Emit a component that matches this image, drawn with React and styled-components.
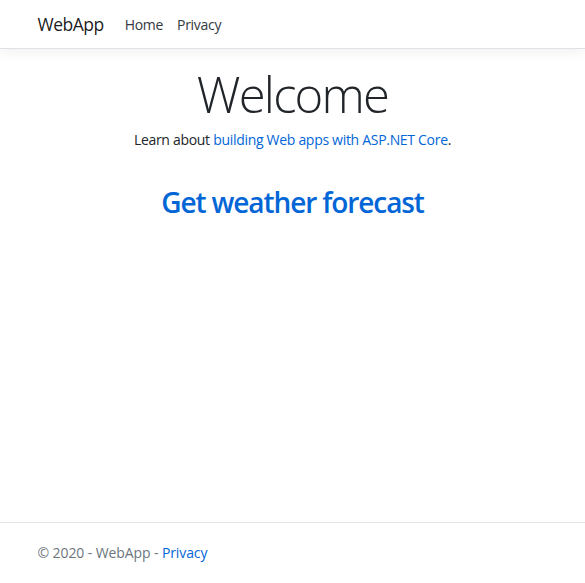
import React from "react";
import styled, { createGlobalStyle } from "styled-components";

const GlobalStyle = createGlobalStyle`
  html { font-size: 14px; }
  body {
    margin: 0;
    font-family: "Open Sans", "Liberation Sans", sans-serif;
    color: #212529;
    background: #fff;
    line-height: 1.5;
  }
  * { box-sizing: border-box; }
  a { color: #0366d6; text-decoration: none; }
`;

const Page = styled.div`
  min-height: 100vh;
  display: flex;
  flex-direction: column;
`;

const Container = styled.div`
  width: 100%;
  max-width: 540px;
  margin: 0 auto;
  padding: 0 15px;
`;

const Navbar = styled.header`
  background: #fff;
  border-bottom: 1px solid #dee2e6;
  box-shadow: 0 0.25rem 0.75rem rgba(0, 0, 0, 0.05);
  padding: 8.5px 16px 7.5px;
  margin-bottom: 14px;
`;

const NavInner = styled(Container)`
  display: flex;
  align-items: center;
  height: 32px;
`;

const Brand = styled.a`
  color: rgba(0, 0, 0, 0.9);
  font-size: 17.5px;
  letter-spacing: -0.5px;
  margin-right: 14px;
`;

const NavLink = styled.a`
  color: #343a40;
  font-size: 14px;
  letter-spacing: -0.3px;
  padding: 0 7px;
`;

const Main = styled.main`
  flex: 1;
  text-align: center;
`;

const Title = styled.h1`
  font-size: 49px;
  font-weight: 300;
  letter-spacing: -1.8px;
  line-height: 1.2;
  margin: 0 0 5px;
  padding-top: 2px;
`;

const Lead = styled.p`
  font-size: 14px;
  letter-spacing: -0.3px;
  margin: 0 0 14px;
`;

const Forecast = styled.a`
  display: inline-block;
  margin-top: 22px;
  font-size: 28px;
  font-weight: 600;
  letter-spacing: -1.1px;
  line-height: 1.2;
`;

const Footer = styled.footer`
  border-top: 1px solid #e5e5e5;
  line-height: 60px;
  color: #6c757d;
  font-size: 14px;
  letter-spacing: -0.1px;
  white-space: nowrap;
`;

export default function App() {
  return (
    <Page>
      <GlobalStyle />
      <Navbar>
        <NavInner>
          <Brand href="#">WebApp</Brand>
          <NavLink href="#">Home</NavLink>
          <NavLink href="#">Privacy</NavLink>
        </NavInner>
      </Navbar>
      <Main>
        <Container>
          <Title>Welcome</Title>
          <Lead>
            Learn about <a href="#">building Web apps with ASP.NET Core</a>.
          </Lead>
          <Forecast href="#">Get weather forecast</Forecast>
        </Container>
      </Main>
      <Footer>
        <Container>
          © 2020 - WebApp - <a href="#">Privacy</a>
        </Container>
      </Footer>
    </Page>
  );
}
